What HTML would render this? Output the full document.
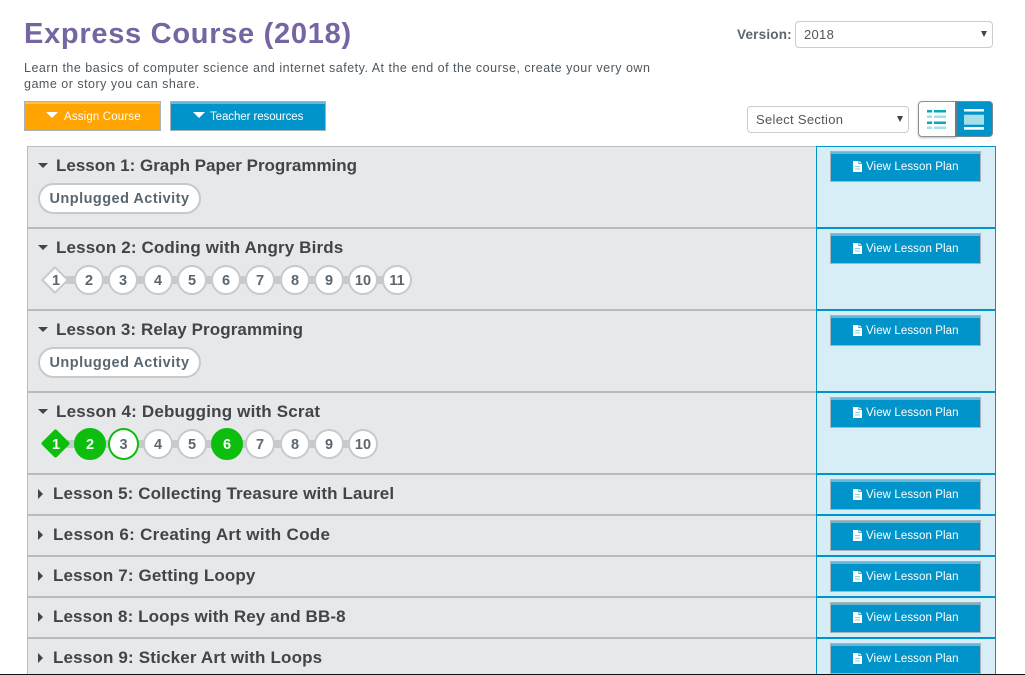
<!DOCTYPE html>
<html><head><meta charset="utf-8"><style>
html,body{margin:0;padding:0;background:#fff;width:1025px;height:675px;overflow:hidden}
body{position:relative;font-family:"Liberation Sans",sans-serif;color:#5b6770}
div{position:absolute;box-sizing:border-box}
.t{white-space:nowrap}
.row{left:27px;width:790px;background:#e7e8ea;border-left:1px solid #bbb;border-top:2px solid #bbb}
.cell{left:816px;width:180px;background:#d7eef6;border:1px solid #0094ca;border-bottom:0;border-top:2px solid #0094ca}
.vb{left:830px;width:151px;height:31px;background:#0094ca;border:1px solid #a9b4ba;box-shadow:inset 0 2px 0 #6bb5d6;color:#fff;font-size:11.5px;line-height:30px;padding-left:35px;white-space:nowrap;letter-spacing:.09px}
.vb svg{position:absolute;left:22px;top:9px}
.title{left:56px;font-size:17px;font-weight:bold;color:#3f4549;white-space:nowrap;line-height:20px}
.tc{left:53px}
.arr{width:0;height:0;left:38px;border-left:5px solid transparent;border-right:5px solid transparent;border-top:5px solid #3f4549}
.arr2{width:0;height:0;left:38px;border-top:5px solid transparent;border-bottom:5px solid transparent;border-left:5px solid #3f4549}
.pill{left:38px;width:163px;height:31px;background:#fff;border:2px solid #c6cacd;border-radius:16px;text-align:center;font-size:14.5px;font-weight:bold;line-height:29px;color:#5b6770;letter-spacing:.47px;white-space:nowrap}
.bar{left:55px;height:8px;background:#c6cacd}
.b{width:30px;height:30px;border-radius:50%;background:#fff;border:2px solid #c6cacd;text-align:center;font-size:14.5px;font-weight:bold;line-height:28px;color:#5b6770}
.b.g{background:#0ebe0e;border-color:#0ebe0e;color:#fff;width:32px;height:32px;line-height:30px}
.b.o{border-color:#0ebe0e}
.d{width:20px;height:20px;background:#fff;border:2px solid #c6cacd;transform:rotate(45deg);border-radius:2px}
.d.g{width:21px;height:21px;background:#0ebe0e;border-color:#0ebe0e}
.dt{width:30px;text-align:center;font-size:14.5px;font-weight:bold;line-height:20px;color:#5b6770}
.sel{background:#fff;border:1px solid #ccc;border-radius:4px;font-size:13px;color:#555;letter-spacing:.3px;white-space:nowrap}
.sa{width:0;height:0;border-left:3.5px solid transparent;border-right:3.5px solid transparent;border-top:6px solid #444}
</style></head><body>

<div class="t" style="left:24px;top:16px;font-size:29px;font-weight:bold;color:#7665a0;line-height:36px;letter-spacing:.72px">Express Course (2018)</div>
<div class="t" style="left:24px;top:60px;font-size:12.5px;line-height:16px;color:#4d575f;letter-spacing:.5px">Learn the basics of computer science and internet safety. At the end of the course, create your very own<br>game or story you can share.</div>

<div style="left:24px;top:101px;width:137px;height:30px;background:#ffa400;border:1px solid #a9b4ba;box-shadow:inset 0 2px 0 #ffc04d"></div>
<div style="left:46px;top:112px;width:0;height:0;border-left:6.5px solid transparent;border-right:6.5px solid transparent;border-top:6.5px solid #fff"></div>
<div class="t" style="left:64px;top:109px;font-size:11.5px;line-height:16px;color:#fff;letter-spacing:.15px">Assign Course</div>

<div style="left:170px;top:101px;width:156px;height:30px;background:#0094ca;border:1px solid #a9b4ba;box-shadow:inset 0 2px 0 #6bb5d6"></div>
<div style="left:193px;top:112px;width:0;height:0;border-left:6.5px solid transparent;border-right:6.5px solid transparent;border-top:6.5px solid #fff"></div>
<div class="t" style="left:210px;top:109px;font-size:11.5px;line-height:16px;color:#fff;letter-spacing:-.08px">Teacher resources</div>

<div class="t" style="left:737px;top:27px;font-size:13.5px;font-weight:bold;line-height:16px;color:#5b6770;letter-spacing:.2px">Version:</div>
<div class="sel" style="left:795px;top:21px;width:198px;height:27px;line-height:25px;padding-left:8px">2018</div>
<div class="sa" style="left:981px;top:31px"></div>

<div class="sel" style="left:747px;top:106px;width:162px;height:27px;line-height:25px;padding-left:8px">Select Section</div>
<div class="sa" style="left:897px;top:116px"></div>

<div style="left:918px;top:101px;width:38px;height:36px;background:#fff;border:1px solid #8a9298;border-radius:4px 0 0 4px;box-shadow:0 1px 2px rgba(0,0,0,.25)"></div>
<div style="left:955px;top:101px;width:38px;height:36px;background:#0094ca;border:1px solid #7a8a92;border-left:2px solid #6d7b83;border-radius:0 4px 4px 0"></div>
<svg style="position:absolute;left:918px;top:101px" width="75" height="36">
<g fill="#00adbc"><rect x="9" y="9" width="5" height="2.500"/><rect x="16" y="9" width="12" height="2.500"/><rect x="9" y="20.500" width="5" height="2.500"/><rect x="16" y="20.500" width="12" height="2.500"/></g>
<g fill="#a6e0e6"><rect x="9" y="14.500" width="5" height="2.500"/><rect x="16" y="14.500" width="12" height="2.500"/><rect x="9" y="25.500" width="5" height="2.500"/><rect x="16" y="25.500" width="12" height="2.500"/></g>
<rect x="46" y="8" width="20" height="2.500" fill="#fff"/><rect x="46" y="13.700" width="20" height="10" fill="#a6e0e6"/><rect x="46" y="26" width="20" height="2.700" fill="#fff"/>
</svg>

<!-- rows -->
<div class="row" style="top:146px;height:83px;border-top-width:1px"></div>
<div class="row" style="top:227px;height:84px"></div>
<div class="row" style="top:309px;height:84px"></div>
<div class="row" style="top:391px;height:84px"></div>
<div class="row" style="top:473px;height:43px"></div>
<div class="row" style="top:514px;height:43px"></div>
<div class="row" style="top:555px;height:43px"></div>
<div class="row" style="top:596px;height:43px"></div>
<div class="row" style="top:637px;height:38px"></div>

<div class="cell" style="top:146px;height:83px;border-top-width:1px"></div>
<div class="cell" style="top:227px;height:84px"></div>
<div class="cell" style="top:309px;height:84px"></div>
<div class="cell" style="top:391px;height:84px"></div>
<div class="cell" style="top:473px;height:43px"></div>
<div class="cell" style="top:514px;height:43px"></div>
<div class="cell" style="top:555px;height:43px"></div>
<div class="cell" style="top:596px;height:43px"></div>
<div class="cell" style="top:637px;height:38px"></div>

<!-- titles -->
<div class="arr" style="top:163px"></div><div class="title" style="top:156px;letter-spacing:-.01px">Lesson 1: Graph Paper Programming</div>
<div class="arr" style="top:245px"></div><div class="title" style="top:238px;letter-spacing:.14px">Lesson 2: Coding with Angry Birds</div>
<div class="arr" style="top:327px"></div><div class="title" style="top:320px;letter-spacing:.09px">Lesson 3: Relay Programming</div>
<div class="arr" style="top:409px"></div><div class="title" style="top:402px;letter-spacing:.18px">Lesson 4: Debugging with Scrat</div>
<div class="arr2" style="top:489px"></div><div class="title tc" style="top:484px;letter-spacing:.12px">Lesson 5: Collecting Treasure with Laurel</div>
<div class="arr2" style="top:530px"></div><div class="title tc" style="top:525px;letter-spacing:.3px">Lesson 6: Creating Art with Code</div>
<div class="arr2" style="top:571px"></div><div class="title tc" style="top:566px;letter-spacing:.14px">Lesson 7: Getting Loopy</div>
<div class="arr2" style="top:612px"></div><div class="title tc" style="top:607px;letter-spacing:.11px">Lesson 8: Loops with Rey and BB-8</div>
<div class="arr2" style="top:653px"></div><div class="title tc" style="top:648px;letter-spacing:.17px">Lesson 9: Sticker Art with Loops</div>

<div class="pill" style="top:183px">Unplugged Activity</div>
<div class="pill" style="top:347px">Unplugged Activity</div>

<!-- lesson 2 -->
<div class="bar" style="top:276px;width:342px"></div>
<div class="d" style="left:45px;top:270px"></div><div class="dt" style="left:41px;top:271px">1</div>
<div class="b" style="left:74px;top:265px">2</div>
<div class="b" style="left:108px;top:265px">3</div>
<div class="b" style="left:143px;top:265px">4</div>
<div class="b" style="left:177px;top:265px">5</div>
<div class="b" style="left:211px;top:265px">6</div>
<div class="b" style="left:245px;top:265px">7</div>
<div class="b" style="left:280px;top:265px">8</div>
<div class="b" style="left:314px;top:265px">9</div>
<div class="b" style="left:348px;top:265px">10</div>
<div class="b" style="left:382px;top:265px">11</div>

<!-- lesson 4 -->
<div class="bar" style="top:440px;width:308px"></div>
<div class="d g" style="left:45px;top:433px"></div><div class="dt" style="left:41px;top:435px;color:#fff">1</div>
<div class="b g" style="left:74px;top:428px">2</div>
<div class="b o" style="left:108px;top:428px;width:31px;height:32px;line-height:30px">3</div>
<div class="b" style="left:143px;top:429px">4</div>
<div class="b" style="left:177px;top:429px">5</div>
<div class="b g" style="left:211px;top:428px">6</div>
<div class="b" style="left:245px;top:429px">7</div>
<div class="b" style="left:280px;top:429px">8</div>
<div class="b" style="left:314px;top:429px">9</div>
<div class="b" style="left:348px;top:429px">10</div>

<!-- buttons -->
<div class="vb" style="top:151px"><svg width="9" height="11" viewBox="0 0 9 11"><path d="M0 0H5.500V3H9V11H0Z" fill="#fff"/><path d="M6.300 0L9 2.300H6.300Z" fill="#fff"/><path d="M2 5.500H7M2 8H7" stroke="#8fcde5" stroke-width="1"/></svg>View Lesson Plan</div>
<div class="vb" style="top:233px"><svg width="9" height="11" viewBox="0 0 9 11"><path d="M0 0H5.500V3H9V11H0Z" fill="#fff"/><path d="M6.300 0L9 2.300H6.300Z" fill="#fff"/><path d="M2 5.500H7M2 8H7" stroke="#8fcde5" stroke-width="1"/></svg>View Lesson Plan</div>
<div class="vb" style="top:315px"><svg width="9" height="11" viewBox="0 0 9 11"><path d="M0 0H5.500V3H9V11H0Z" fill="#fff"/><path d="M6.300 0L9 2.300H6.300Z" fill="#fff"/><path d="M2 5.500H7M2 8H7" stroke="#8fcde5" stroke-width="1"/></svg>View Lesson Plan</div>
<div class="vb" style="top:397px"><svg width="9" height="11" viewBox="0 0 9 11"><path d="M0 0H5.500V3H9V11H0Z" fill="#fff"/><path d="M6.300 0L9 2.300H6.300Z" fill="#fff"/><path d="M2 5.500H7M2 8H7" stroke="#8fcde5" stroke-width="1"/></svg>View Lesson Plan</div>
<div class="vb" style="top:479px"><svg width="9" height="11" viewBox="0 0 9 11"><path d="M0 0H5.500V3H9V11H0Z" fill="#fff"/><path d="M6.300 0L9 2.300H6.300Z" fill="#fff"/><path d="M2 5.500H7M2 8H7" stroke="#8fcde5" stroke-width="1"/></svg>View Lesson Plan</div>
<div class="vb" style="top:520px"><svg width="9" height="11" viewBox="0 0 9 11"><path d="M0 0H5.500V3H9V11H0Z" fill="#fff"/><path d="M6.300 0L9 2.300H6.300Z" fill="#fff"/><path d="M2 5.500H7M2 8H7" stroke="#8fcde5" stroke-width="1"/></svg>View Lesson Plan</div>
<div class="vb" style="top:561px"><svg width="9" height="11" viewBox="0 0 9 11"><path d="M0 0H5.500V3H9V11H0Z" fill="#fff"/><path d="M6.300 0L9 2.300H6.300Z" fill="#fff"/><path d="M2 5.500H7M2 8H7" stroke="#8fcde5" stroke-width="1"/></svg>View Lesson Plan</div>
<div class="vb" style="top:602px"><svg width="9" height="11" viewBox="0 0 9 11"><path d="M0 0H5.500V3H9V11H0Z" fill="#fff"/><path d="M6.300 0L9 2.300H6.300Z" fill="#fff"/><path d="M2 5.500H7M2 8H7" stroke="#8fcde5" stroke-width="1"/></svg>View Lesson Plan</div>
<div class="vb" style="top:643px"><svg width="9" height="11" viewBox="0 0 9 11"><path d="M0 0H5.500V3H9V11H0Z" fill="#fff"/><path d="M6.300 0L9 2.300H6.300Z" fill="#fff"/><path d="M2 5.500H7M2 8H7" stroke="#8fcde5" stroke-width="1"/></svg>View Lesson Plan</div>

<div style="left:0;top:674px;width:1025px;height:1px;background:#111"></div>
</body></html>
